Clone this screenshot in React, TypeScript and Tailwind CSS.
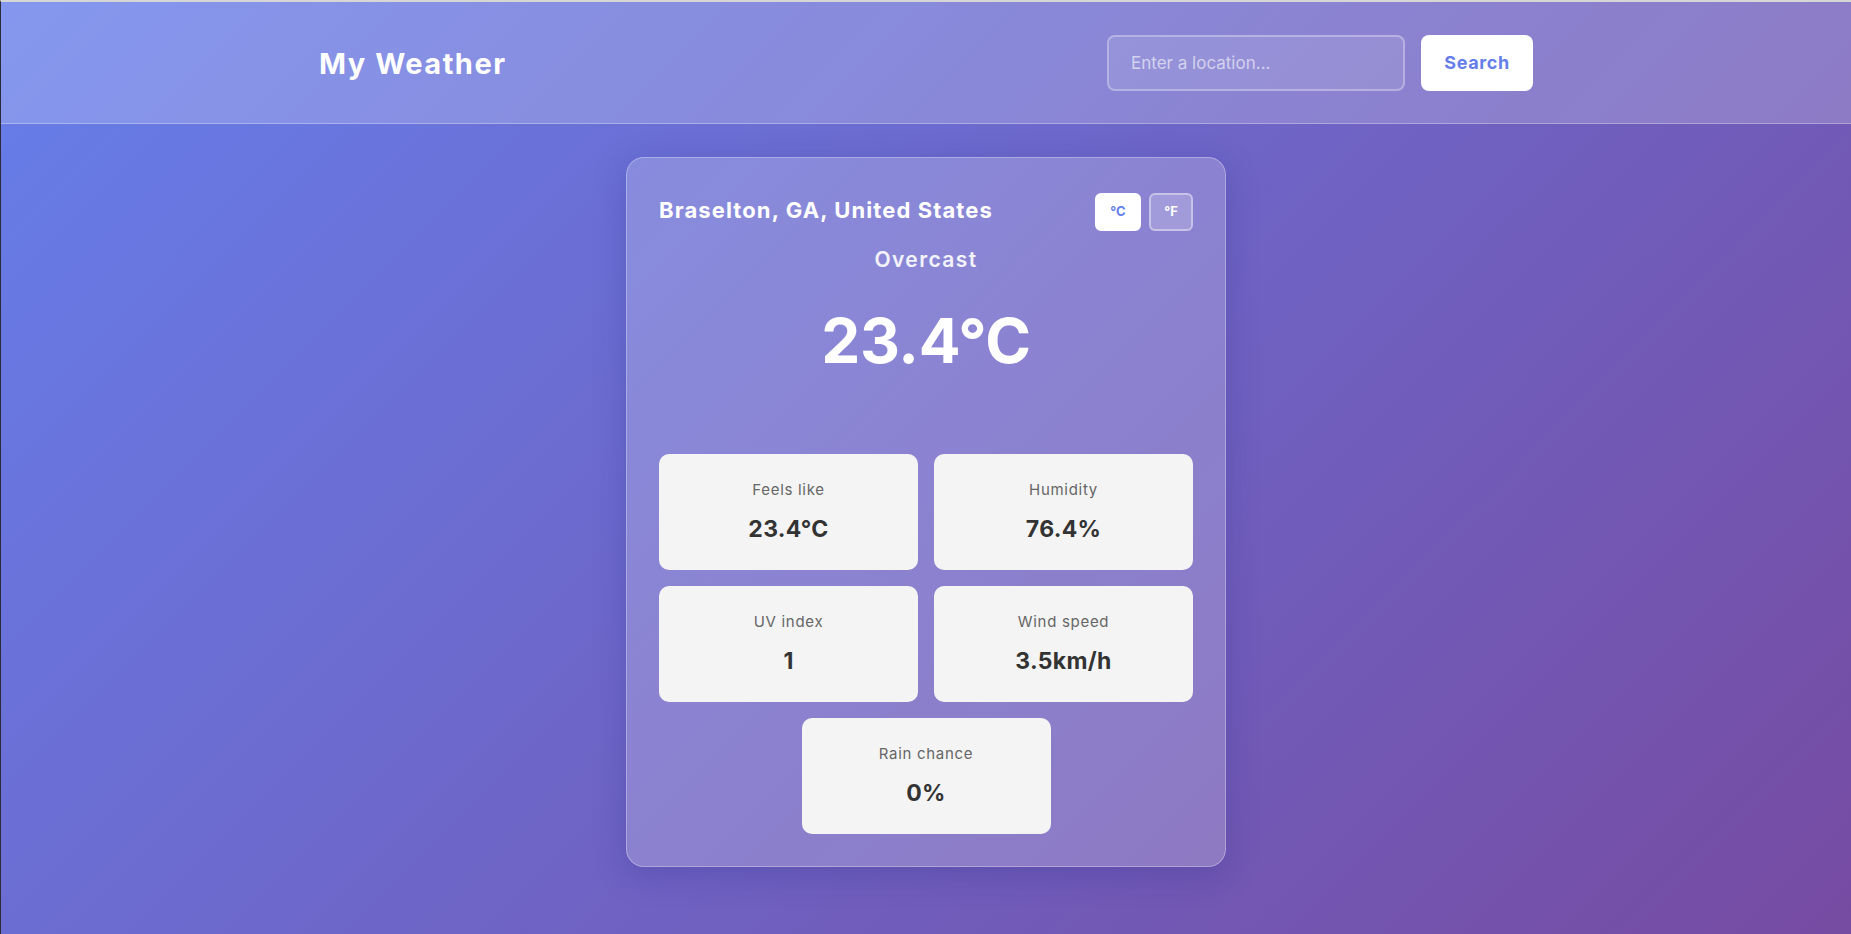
import React from "react";

const stats = [
  { label: "Feels like", value: "23.4°C" },
  { label: "Humidity", value: "76.4%" },
  { label: "UV index", value: "1" },
  { label: "Wind speed", value: "3.5km/h" },
];

function Stat({ label, value, className = "" }: { label: string; value: string; className?: string }) {
  return (
    <div className={`flex h-[116px] flex-col items-center rounded-[10px] bg-[#f4f4f4] pt-[26px] ${className}`}>
      <div className="text-[15px] leading-[20px] tracking-[0.7px] text-[#666]">{label}</div>
      <div className="mt-[18px] text-[23px] font-bold leading-[22px] tracking-[0.3px] text-[#333]">{value}</div>
    </div>
  );
}

export default function App() {
  return (
    <div
      className="min-h-[934px] border-l border-t-2 border-l-[#2b2b3b] border-t-[#d6d6d6] bg-[linear-gradient(135deg,#667eea_0%,#764ba2_100%)] text-white"
      style={{ fontFamily: "Inter, 'Noto Sans', sans-serif" }}
    >
      <header className="border-b border-white/30 bg-white/20">
        <div className="mx-auto flex h-[121px] w-[1214px] items-center justify-between">
          <h1 className="pt-[2px] text-[29px] font-bold tracking-[1.5px]">My Weather</h1>
          <div className="flex items-center gap-4">
            <input
              className="h-[56px] w-[298px] rounded-[8px] border-2 border-white/30 bg-white/10 px-[22px] text-[17px] text-white outline-none placeholder:text-white/60"
              placeholder="Enter a location..."
            />
            <button className="h-[56px] w-[112px] rounded-[8px] bg-white text-[18px] font-bold tracking-[0.6px] text-[#667eea]">
              Search
            </button>
          </div>
        </div>
      </header>

      <main className="flex justify-center pt-[33px]">
        <div className="w-[600px] rounded-[18px] border border-white/30 bg-white/20 px-[32px] pb-[32px] pt-[33px] shadow-[0_8px_32px_rgba(31,38,135,0.25)]">
          <div className="flex items-start justify-between">
            <h2 className="pt-[5px] text-[22px] font-bold leading-[28px] tracking-[1.1px]">Braselton, GA, United States</h2>
            <div className="flex gap-[8px] pt-[2px]">
              <button className="h-[38px] w-[46px] rounded-[6px] border-2 border-white bg-white text-[13px] font-bold text-[#667eea]">
                °C
              </button>
              <button className="h-[38px] w-[44px] rounded-[6px] border-2 border-white/40 bg-white/20 text-[13px] font-bold text-white">
                °F
              </button>
            </div>
          </div>
          <div className="mt-[15px] text-center text-[21px] font-semibold leading-[28px] tracking-[1.4px] text-white/90">Overcast</div>
          <div className="mt-[27px] text-center text-[62px] font-bold leading-[80px] tracking-[-0.3px]">23.4°C</div>
          <div className="mt-[73px] grid grid-cols-2 gap-4">
            {stats.map((s) => (
              <Stat key={s.label} label={s.label} value={s.value} />
            ))}
            <Stat label="Rain chance" value="0%" className="col-span-2 mx-auto w-[249px]" />
          </div>
        </div>
      </main>
    </div>
  );
}
